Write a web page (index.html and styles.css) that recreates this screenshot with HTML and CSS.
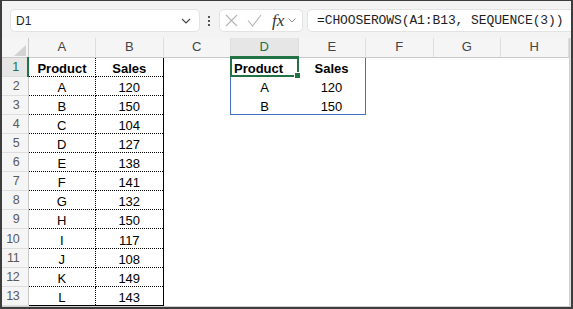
FILE: index.html
```html
<!DOCTYPE html>
<html lang="en">
<head>
    <meta charset="UTF-8">
    <title>CHOOSEROWS</title>
    <link rel="stylesheet" href="styles.css">
</head>
<body>
    <div class="window">
        <div class="toolbar">
            <div class="namebox">
                <span>D1</span>
                <svg class="chev" width="10" height="6" viewBox="0 0 10 6"><path d="M1 1 L5 5 L9 1" fill="none" stroke="#444" stroke-width="1.1"/></svg>
            </div>
            <div class="dots"><i></i><i></i><i></i></div>
            <div class="fxbox">
                <svg width="13" height="13" viewBox="0 0 13 13"><path d="M1 1 L12 12 M12 1 L1 12" stroke="#b5b5b5" stroke-width="1.1" fill="none"/></svg>
                <svg width="15" height="13" viewBox="0 0 15 13"><path d="M1 6.5 L5.5 12 L14 1" stroke="#b5b5b5" stroke-width="1.1" fill="none"/></svg>
                <span class="fx">fx</span>
                <svg width="8" height="5" viewBox="0 0 8 5"><path d="M0.5 0.5 L4 4 L7.5 0.5" fill="none" stroke="#8a8a8a" stroke-width="1"/></svg>
            </div>
            <div class="formula">=CHOOSEROWS(A1:B13, SEQUENCE(3))</div>
        </div>

        <div class="main">
            <table class="sheet">
                <colgroup>
                    <col class="c-row">
                    <col><col><col><col><col><col><col><col>
                </colgroup>
                <thead>
                    <tr>
                        <th class="corner"><svg width="12" height="11" viewBox="0 0 12 11"><path d="M12 0 L12 11 L0 11 Z" fill="#d3d3d3"/></svg></th>
                        <th class="col">A</th>
                        <th class="col">B</th>
                        <th class="col">C</th>
                        <th class="col active">D</th>
                        <th class="col">E</th>
                        <th class="col">F</th>
                        <th class="col">G</th>
                        <th class="col">H</th>
                    </tr>
                </thead>
                <tbody>
                    <tr>
                        <th class="row active">1</th>
                        <td class="t a head">Product</td>
                        <td class="t b head">Sales</td>
                        <td></td>
                        <td class="spill top left head d1">Product<div class="sel"></div></td>
                        <td class="spill top right head center">Sales</td>
                        <td></td><td></td><td></td>
                    </tr>
                    <tr>
                        <th class="row">2</th>
                        <td class="t a">A</td><td class="t b">120</td><td></td>
                        <td class="spill left center">A</td><td class="spill right center">120</td>
                        <td></td><td></td><td></td>
                    </tr>
                    <tr>
                        <th class="row">3</th>
                        <td class="t a">B</td><td class="t b">150</td><td></td>
                        <td class="spill left bottom center">B</td><td class="spill right bottom center">150</td>
                        <td></td><td></td><td></td>
                    </tr>
                    <tr><th class="row">4</th><td class="t a">C</td><td class="t b">104</td><td></td><td></td><td></td><td></td><td></td><td></td></tr>
                    <tr><th class="row">5</th><td class="t a">D</td><td class="t b">127</td><td></td><td></td><td></td><td></td><td></td><td></td></tr>
                    <tr><th class="row">6</th><td class="t a">E</td><td class="t b">138</td><td></td><td></td><td></td><td></td><td></td><td></td></tr>
                    <tr><th class="row">7</th><td class="t a">F</td><td class="t b">141</td><td></td><td></td><td></td><td></td><td></td><td></td></tr>
                    <tr><th class="row">8</th><td class="t a">G</td><td class="t b">132</td><td></td><td></td><td></td><td></td><td></td><td></td></tr>
                    <tr><th class="row">9</th><td class="t a">H</td><td class="t b">150</td><td></td><td></td><td></td><td></td><td></td><td></td></tr>
                    <tr><th class="row">10</th><td class="t a">I</td><td class="t b">117</td><td></td><td></td><td></td><td></td><td></td><td></td></tr>
                    <tr><th class="row">11</th><td class="t a">J</td><td class="t b">108</td><td></td><td></td><td></td><td></td><td></td><td></td></tr>
                    <tr><th class="row">12</th><td class="t a">K</td><td class="t b">149</td><td></td><td></td><td></td><td></td><td></td><td></td></tr>
                    <tr><th class="row">13</th><td class="t a last">L</td><td class="t b last">143</td><td></td><td></td><td></td><td></td><td></td><td></td></tr>
                </tbody>
            </table>
            <div class="vscroll"></div>
        </div>
    </div>
</body>
</html>
```

FILE: styles.css
```css
body {
    margin: 0;
    background: #ffffff;
    font-family: 'Liberation Sans', Arial, sans-serif;
}
.window {
    width: 573px;
    height: 309px;
    box-sizing: border-box;
    border: 2px solid #3d3d3d;
    border-top-width: 1px;
    display: flex;
    flex-direction: column;
    overflow: hidden;
    background: #ffffff;
}

/* formula bar */
.toolbar {
    height: 37px;
    flex: none;
    box-sizing: border-box;
    padding: 8px 0 0 8px;
    display: flex;
    align-items: flex-start;
    background: #f3f3f3;
    overflow: hidden;
}
.namebox, .fxbox, .formula {
    height: 23px;
    box-sizing: border-box;
    background: #ffffff;
    border: 1px solid #e3e3e3;
    border-radius: 5px;
    display: flex;
    align-items: center;
}
.namebox {
    width: 190px;
    padding: 0 8px 0 5px;
    justify-content: space-between;
    font-size: 12px;
    color: #222;
}
.dots {
    width: 3px;
    margin: 0 8px 0 8px;
    padding-top: 7px;
    display: flex;
    flex-direction: column;
    gap: 2px;
}
.dots i {
    display: block;
    width: 2px;
    height: 2px;
    background: #555;
}
.fxbox {
    width: 84px;
    padding: 0 0 0 5px;
    gap: 8px;
}
.fxbox svg:first-child {
    margin-right: 1px;
}
.fx {
    font-family: 'Liberation Serif', 'Times New Roman', serif;
    font-style: italic;
    font-size: 17px;
    color: #333;
    margin-left: 2px;
    margin-right: -4px;
    line-height: 1;
}
.formula {
    flex: 1;
    margin-left: 4px;
    margin-right: -20px;
    padding-left: 9px;
    font-family: 'Liberation Mono', 'DejaVu Sans Mono', monospace;
    font-size: 13px;
    letter-spacing: -0.1px;
    color: #1e1e1e;
    white-space: nowrap;
}

/* grid */
.main {
    flex: 1;
    display: flex;
    border-bottom: 1px solid #cfcfcf;
}
.sheet {
    width: 566px;
    table-layout: fixed;
    border-collapse: collapse;
    font-size: 13px;
}
.sheet col {
    width: 67.5px;
}
.sheet col.c-row {
    width: 26px;
}
.sheet tr {
    height: 19px;
}
.sheet th {
    font-weight: normal;
    background: #f5f5f5;
    padding: 0;
    font-size: 13px;
}
.corner {
    border-right: 1px solid #c9c9c9;
    border-bottom: 1px solid #c9c9c9;
}
.corner svg {
    display: block;
    margin: 6px 2px 0 auto;
}
.col {
    color: #444;
    text-align: center;
    border-right: 1px solid #dedede;
    border-bottom: 1px solid #c9c9c9;
    line-height: 18px;
}
.col.active {
    background: #e6e6e6;
    color: #1e7145;
    border-bottom: 2px solid #217346;
}
.sheet th.row {
    color: #5a5a5a;
    text-align: right;
    padding-right: 8px;
    border-bottom: 1px solid #dedede;
    border-right: 1px solid #c9c9c9;
    font-size: 12.5px;
    letter-spacing: -0.3px;
}
.sheet th.row.active {
    background: #e6e6e6;
    color: #1e7145;
    border-right: 2px solid #217346;
}
.sheet td {
    padding: 0 3px;
    color: #000;
    line-height: 15px;
    vertical-align: bottom;
    white-space: nowrap;
    overflow: hidden;
}

/* source table A1:B13 */
td.t {
    text-align: center;
    border-bottom: 1px dotted #000;
}
td.a {
    border-right: 1px dotted #000;
}
td.b {
    border-right: 1px solid #000;
}
td.last {
    border-bottom: 1px solid #000;
}
.head {
    font-weight: bold;
}

/* spill range D1:E3 */
.center {
    text-align: center;
}
td.spill.top { border-top: 1px solid #4472c4; }
td.spill.left { border-left: 1px solid #4472c4; }
td.spill.right { border-right: 1px solid #4472c4; }
td.spill.bottom { border-bottom: 1px solid #4472c4; }
td.d1 {
    position: relative;
    overflow: visible;
}
.sel {
    position: absolute;
    left: -1px;
    top: -1px;
    right: -1px;
    bottom: -1px;
    border: 2px solid #217346;
}
.sel::after {
    content: "";
    position: absolute;
    right: -4px;
    bottom: -4px;
    width: 5px;
    height: 5px;
    background: #217346;
    border: 1px solid #fff;
}
.vscroll {
    flex: 1;
    background: #e3e3e3;
    border-left: 1px solid #cfcfcf;
}
```
